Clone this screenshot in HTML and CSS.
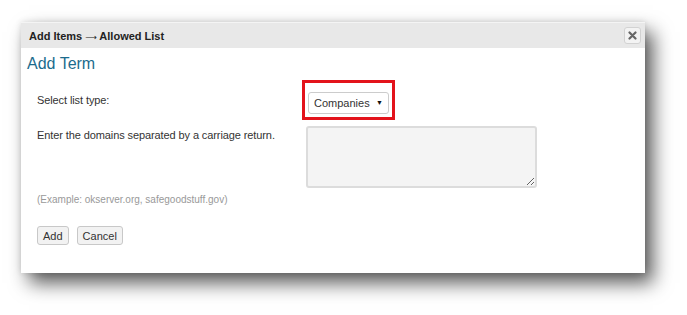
FILE: index.html
```html
<!DOCTYPE html>
<html lang="en">
<head>
    <meta charset="UTF-8">
    <title>Add Items - Allowed List</title>
    <link rel="stylesheet" href="styles.css">
</head>
<body>
    <div class="dialog">
        <div class="titlebar">
            <span class="title">Add Items <span class="arrow">&#10230;</span> Allowed List</span>
            <button class="close" title="Close">
                <svg width="9" height="9" viewBox="0 0 9 9">
                    <path d="M1.5 1.5 L7.5 7.5 M7.5 1.5 L1.5 7.5" stroke="#666" stroke-width="2.2" stroke-linecap="round"/>
                </svg>
            </button>
        </div>

        <div class="content">
            <h2>Add Term</h2>

            <div class="form">
                <label class="row-label first" for="list-type">Select list type:</label>
                <span class="highlight">
                    <span class="select-wrap">
                        <select id="list-type">
                            <option>Companies</option>
                            <option>Domains</option>
                        </select>
                    </span>
                </span>

                <label class="row-label" for="domains">Enter the domains separated by a carriage return.</label>
                <textarea id="domains"></textarea>
            </div>

            <p class="hint">(Example: okserver.org, safegoodstuff.gov)</p>

            <div class="actions">
                <button class="btn">Add</button>
                <button class="btn">Cancel</button>
            </div>
        </div>
    </div>
</body>
</html>
```

FILE: styles.css
```css
html, body {
    min-height: 315px;
}
body {
    margin: 0;
    padding: 22px 0 0 21px;
    box-sizing: border-box;
    background-color: #ffffff;
    font-family: "Liberation Sans", Arial, sans-serif;
    font-size: 11px;
    color: #333;
}
.dialog {
    box-sizing: border-box;
    width: 624px;
    height: 251px;
    background-color: #ffffff;
    box-shadow: 0 0 6px rgba(0, 0, 0, 0.12), 8px 10px 18px rgba(0, 0, 0, 0.65);
}
.titlebar {
    height: 26px;
    display: flex;
    align-items: center;
    justify-content: space-between;
    padding: 0 4px 0 8px;
    background-color: #e8e8e8;
    border-top: 1px solid #f4f4f4;
    box-sizing: border-box;
}
.title {
    font-weight: bold;
    color: #222;
}
.arrow {
    font-family: "DejaVu Sans", sans-serif;
    font-weight: normal;
    font-size: 8px;
}
.close {
    width: 17px;
    height: 17px;
    padding: 0;
    display: flex;
    align-items: center;
    justify-content: center;
    background-color: #f3f3f3;
    border: 1px solid #d2d2d2;
    border-radius: 3px;
}
.content {
    padding: 0 6px;
}
.content h2 {
    margin: 6px 0 6px;
    font-size: 16px;
    line-height: 20px;
    font-weight: normal;
    color: #1b6b8d;
}
.form {
    display: grid;
    grid-template-columns: 269px auto;
    row-gap: 6px;
    padding-left: 10px;
}
.row-label {
    line-height: 14px;
    padding-top: 2px;
    letter-spacing: -0.1px;
}
.row-label.first {
    padding-top: 13px;
}
.highlight {
    justify-self: start;
    margin-left: -4px;
    padding: 9px 3px 3px 3px;
    border: 3px solid #e3131b;
}
.select-wrap {
    position: relative;
    display: block;
}
.select-wrap::after {
    content: "\25BC";
    position: absolute;
    right: 6px;
    top: 7px;
    font-size: 7px;
    color: #111;
    pointer-events: none;
}
.select-wrap select {
    appearance: none;
    -webkit-appearance: none;
    display: block;
    width: 81px;
    height: 22px;
    padding: 0 0 0 5px;
    font-family: "Liberation Sans", Arial, sans-serif;
    font-size: 11px;
    color: #333;
    background-color: #ffffff;
    border: 1px solid #ccc;
    border-radius: 3px;
}
textarea {
    box-sizing: border-box;
    width: 231px;
    height: 62px;
    margin: 0;
    background-color: #f4f4f4;
    border: 2px solid #dcdcdc;
    border-radius: 3px;
}
.hint {
    margin: 5px 0 0 10px;
    font-size: 10px;
    line-height: 14px;
    color: #999;
}
.actions {
    display: flex;
    gap: 8px;
    margin: 19px 0 0 10px;
}
.btn {
    height: 19px;
    padding: 0 5px;
    font-family: "Liberation Sans", Arial, sans-serif;
    font-size: 11px;
    color: #333;
    background-color: #f2f2f2;
    border: 1px solid #c8c8c8;
    border-radius: 3px;
}
```
